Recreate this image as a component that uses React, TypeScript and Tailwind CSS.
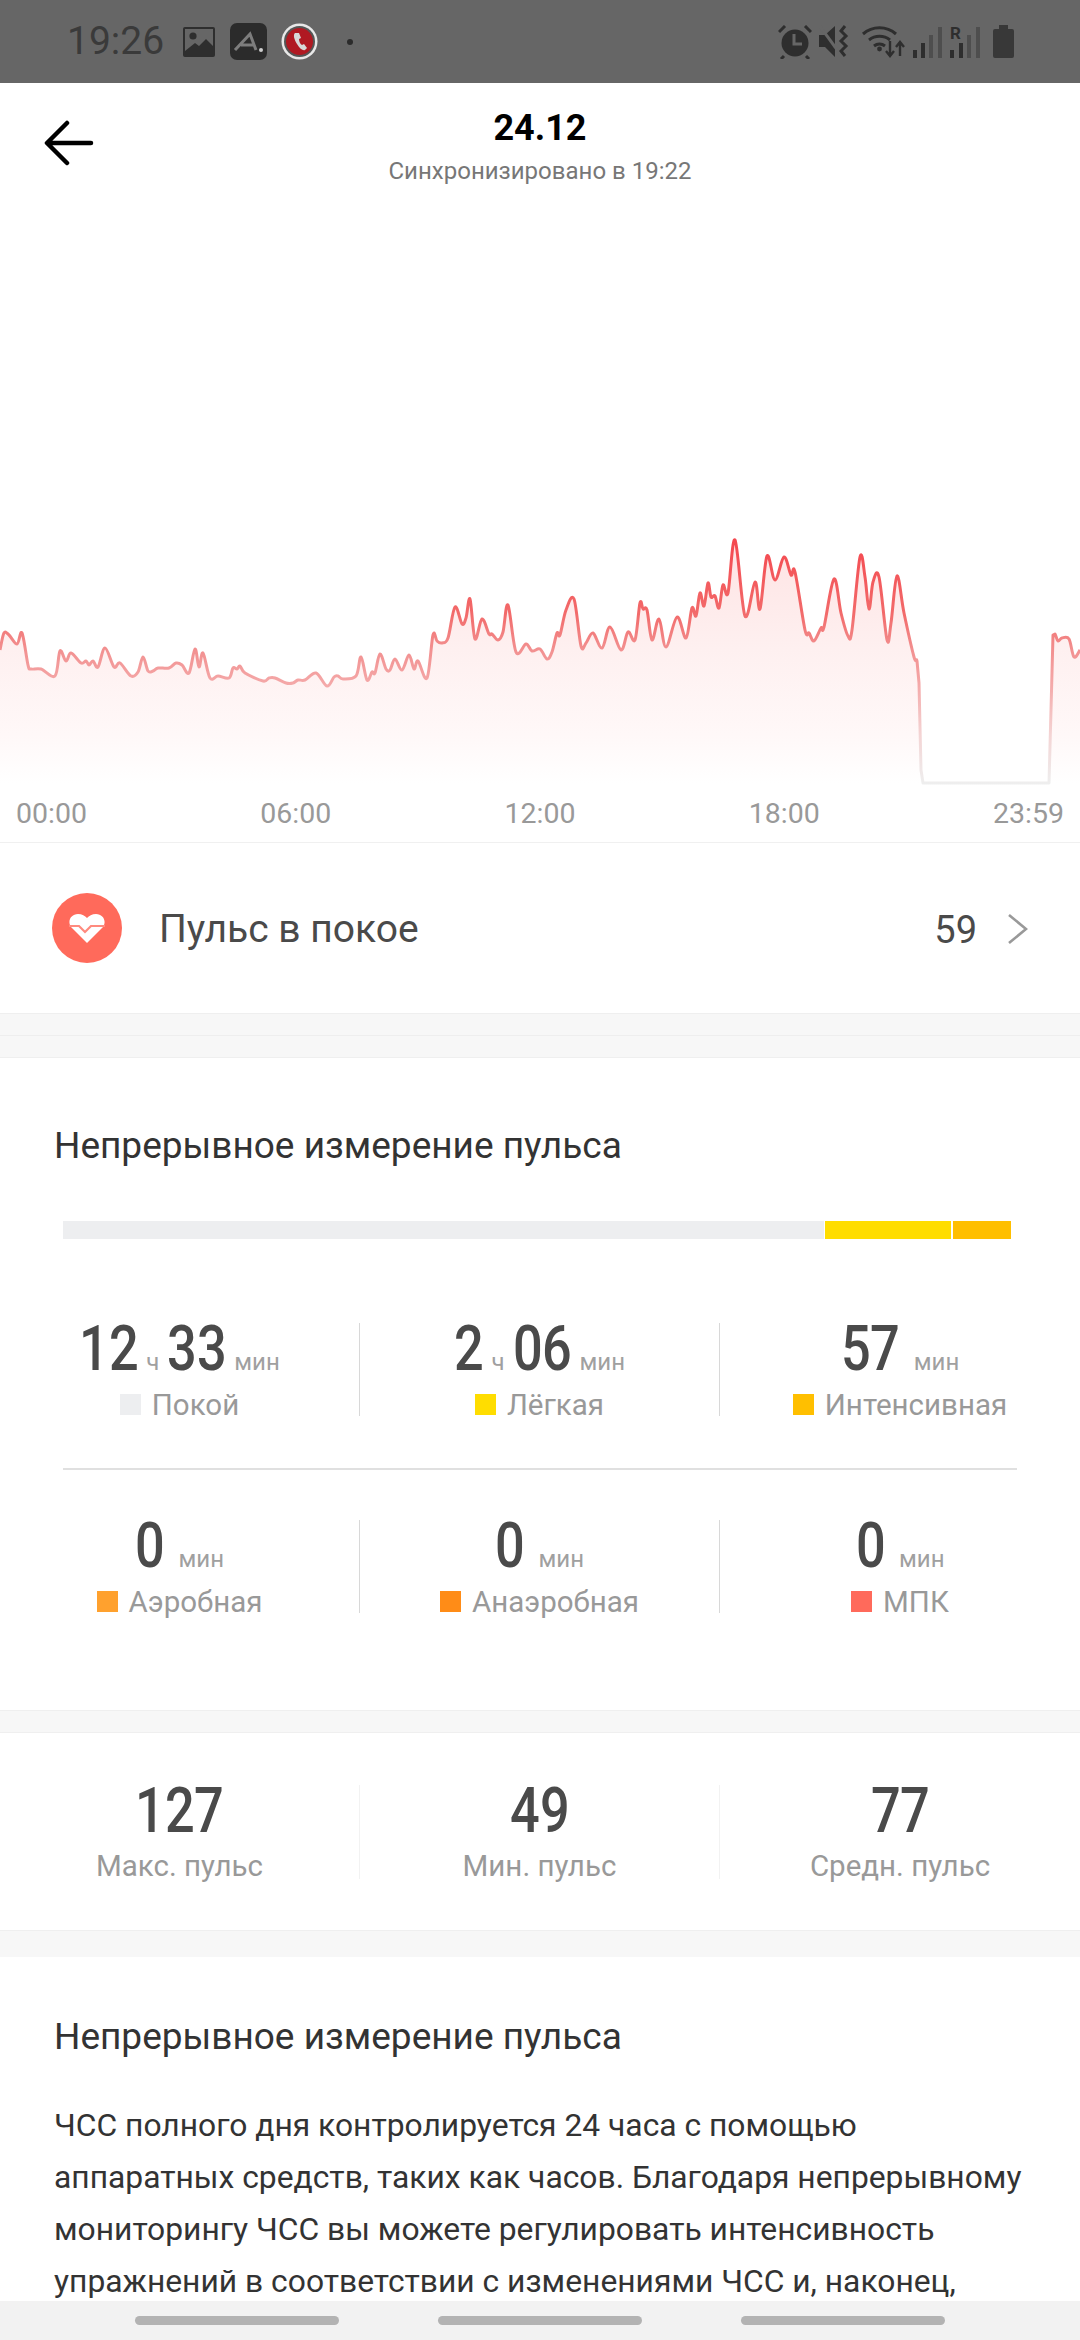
import React from "react";

const points: [number, number][] = [
  [0, 650], [4, 633], [9, 635], [17, 644], [22, 633], [28, 665], [31, 669], [41, 669], [55, 676], [60, 651],
  [66, 661], [71, 653], [81, 663], [86, 661], [89, 665], [93, 661], [98, 667], [105, 648], [114, 667], [120, 663],
  [131, 676], [138, 672], [143, 657], [148, 671], [153, 671], [158, 668], [169, 668], [176, 663], [182, 665], [189, 673],
  [195, 649], [199, 667], [203, 653], [210, 678], [218, 676], [229, 678], [233, 668], [237, 669], [240, 666], [245, 673],
  [263, 681], [269, 678], [275, 678], [286, 683], [293, 683], [298, 680], [305, 680], [316, 673], [327, 686], [334, 677],
  [338, 676], [343, 679], [356, 676], [361, 657], [367, 680], [372, 672], [375, 673], [380, 654], [386, 669], [390, 670],
  [395, 659], [402, 670], [409, 655], [414, 669], [418, 661], [427, 678], [433, 635], [437, 641], [442, 643], [448, 638],
  [455, 607], [462, 624], [466, 618], [470, 599], [475, 639], [482, 619], [489, 634], [492, 634], [498, 640], [503, 632],
  [508, 605], [516, 652], [526, 644], [532, 651], [540, 649], [547, 659], [552, 652], [557, 633], [560, 635], [566, 610],
  [574, 599], [581, 646], [586, 643], [593, 633], [602, 648], [610, 627], [621, 650], [628, 632], [635, 640], [640, 603],
  [643, 609], [647, 610], [652, 640], [659, 619], [666, 647], [677, 617], [686, 638], [692, 608], [696, 616], [700, 593],
  [704, 606], [708, 583], [711, 597], [715, 596], [719, 608], [723, 585], [728, 593], [735, 540], [745, 616], [755, 582],
  [760, 609], [767, 556], [775, 580], [784, 557], [791, 575], [795, 572], [805, 630], [809, 633], [814, 641], [821, 628],
  [824, 627], [834, 579], [841, 613], [848, 636], [852, 630], [860, 557], [865, 577], [869, 609], [873, 582], [879, 577],
  [887, 640], [891, 623], [897, 576], [904, 613], [914, 657], [917, 661], [919, 683], [921, 770], [923, 783], [1049, 783],
  [1051, 710], [1053, 635], [1055, 634], [1058, 641], [1062, 638], [1069, 639], [1074, 657], [1080, 650],
];

// catmull-rom through the traced points, straight near the drop-out so it doesn't overshoot
const buildLine = (pts: [number, number][]) => {
  let d = `M${pts[0][0]} ${pts[0][1]}`;
  for (let i = 0; i < pts.length - 1; i++) {
    const p0 = pts[Math.max(i - 1, 0)];
    const p1 = pts[i];
    const p2 = pts[i + 1];
    const p3 = pts[Math.min(i + 2, pts.length - 1)];
    const nearGap = p1[0] >= 917 && p1[0] <= 1053;
    const k = nearGap ? 0 : 0.17;
    d += `C${(p1[0] + (p2[0] - p0[0]) * k).toFixed(1)} ${(p1[1] + (p2[1] - p0[1]) * k).toFixed(1)} ${(p2[0] - (p3[0] - p1[0]) * k).toFixed(1)} ${(p2[1] - (p3[1] - p1[1]) * k).toFixed(1)} ${p2[0]} ${p2[1]}`;
  }
  return d;
};

const linePath = buildLine(points);

const PulseChart = () => (
  <svg className="block w-[1080px] h-[596px]" viewBox="0 190 1080 596">
    <defs>
      <linearGradient id="pulseFill" gradientUnits="userSpaceOnUse" x1="0" y1="540" x2="0" y2="783">
        <stop offset="0" stopColor="#fee3e3" />
        <stop offset="0.45" stopColor="#fef0f0" />
        <stop offset="0.8" stopColor="#fff8f8" />
        <stop offset="1" stopColor="#ffffff" />
      </linearGradient>
      <linearGradient id="pulseStroke" gradientUnits="userSpaceOnUse" x1="0" y1="540" x2="0" y2="783">
        <stop offset="0" stopColor="#f4484f" />
        <stop offset="0.3" stopColor="#f26a6a" />
        <stop offset="0.45" stopColor="#f29090" />
        <stop offset="0.58" stopColor="#f4a6a6" />
        <stop offset="0.8" stopColor="#f4d4d4" />
        <stop offset="1" stopColor="#eeeeee" />
      </linearGradient>
    </defs>
    <path d={`${linePath}L1080 783L0 783Z`} fill="url(#pulseFill)" />
    <path d={linePath} fill="none" stroke="url(#pulseStroke)" strokeWidth="3" strokeLinejoin="round" />
  </svg>
);

const StatusBar = () => (
  <div className="h-[83px] bg-[#666666] flex items-center text-[#3a3a3a] shrink-0">
    <span className="ml-[67px] w-[116px] text-[39px] leading-none">19:26</span>
    <svg className="w-[32px] h-[30px]" viewBox="0 0 32 30">
      <rect x="0" y="0" width="32" height="30" rx="2" fill="#2e2e2e" />
      <path d="M2 2h28v17l-7-7-7 7-4-3-10 8z" fill="#666666" />
      <circle cx="10" cy="9" r="3.6" fill="#2e2e2e" />
    </svg>
    <svg className="ml-[15px] w-[37px] h-[37px]" viewBox="0 0 37 37">
      <rect width="37" height="37" rx="7" fill="#2b2b2b" />
      <path d="M5 27L20 11l6 16M11 22h12" fill="none" stroke="#7d7d7d" strokeWidth="3" />
      <circle cx="31" cy="27" r="2" fill="#cfcfcf" />
    </svg>
    <svg className="ml-[14px] w-[37px] h-[37px]" viewBox="0 0 37 37">
      <circle cx="18.5" cy="18.5" r="18" fill="#e8e8e8" />
      <circle cx="18.5" cy="18.5" r="15.5" fill="#555555" />
      <circle cx="18.5" cy="18.5" r="13.5" fill="#b01922" />
      <path d="M14 10c-2 2-1 6 2 11s6 7 8 6l2-2-3-4-2 1c-2-1-3-4-3-6l2-1-2-5z" fill="#d8d8d8" />
    </svg>
    <div className="ml-[29px] w-[6px] h-[6px] rounded-full bg-[#2b2b2b]" />
    <div className="flex-1" />
    <svg className="w-[34px] h-[34px]" viewBox="0 0 34 34">
      <circle cx="17" cy="18" r="13.5" fill="#2e2e2e" />
      <path d="M16 9v10h8" fill="none" stroke="#666666" strokeWidth="3" />
      <path d="M1 7l6-6M33 7l-6-6M6 31l-3 3M28 31l3 3" stroke="#2e2e2e" strokeWidth="3" />
    </svg>
    <svg className="ml-[7px] w-[31px] h-[33px]" viewBox="0 0 31 33">
      <path d="M0 10h6l10-9v31L6 22H0z" fill="#2e2e2e" />
      <path d="M0 0l19 26" stroke="#666666" strokeWidth="3" />
      <path d="M26 1l-4 5 5 5-5 5 5 5-5 5 4 5" fill="none" stroke="#2e2e2e" strokeWidth="3" />
    </svg>
    <svg className="ml-[12px] w-[43px] h-[33px]" viewBox="0 0 43 33">
      <path d="M1 9a25 25 0 0 1 33 0M7 15a17 17 0 0 1 21 0M12 21a9 9 0 0 1 11 0" fill="none" stroke="#2e2e2e" strokeWidth="3" />
      <circle cx="17.5" cy="24" r="2.4" fill="#2e2e2e" />
      <path d="M28 16v14M24 26l4 5 4-5M38 31V17M34 22l4-5 4 5" fill="none" stroke="#2e2e2e" strokeWidth="2.4" />
    </svg>
    <svg className="ml-[8px] w-[29px] h-[32px]" viewBox="0 0 29 32">
      <rect x="0" y="24" width="4" height="8" fill="#2e2e2e" />
      <rect x="8" y="17" width="4" height="15" fill="#2e2e2e" />
      <rect x="16" y="9" width="4" height="23" fill="#4e4e4e" />
      <rect x="25" y="1" width="4" height="31" fill="#4e4e4e" />
    </svg>
    <div className="relative ml-[8px] w-[30px] h-[32px]">
      <span className="absolute left-0 top-[-1px] text-[17px] font-bold leading-none text-[#2e2e2e]">R</span>
      <svg className="w-[30px] h-[32px]" viewBox="0 0 30 32">
        <rect x="0" y="24" width="4" height="8" fill="#2e2e2e" />
        <rect x="9" y="17" width="4" height="15" fill="#2e2e2e" />
        <rect x="17" y="9" width="4" height="23" fill="#4e4e4e" />
        <rect x="26" y="1" width="4" height="31" fill="#4e4e4e" />
      </svg>
    </div>
    <svg className="ml-[13px] mr-[66px] w-[21px] h-[33px]" viewBox="0 0 21 33">
      <path d="M6 0h9v4h4a2 2 0 0 1 2 2v25a2 2 0 0 1-2 2H2a2 2 0 0 1-2-2V6a2 2 0 0 1 2-2h4z" fill="#383838" />
    </svg>
  </div>
);

const TopBar = () => (
  <div className="relative h-[107px] shrink-0 flex flex-col items-center">
    <svg className="absolute left-[44px] top-[37px] w-[50px] h-[46px]" viewBox="0 0 50 46">
      <path d="M47 23H4M23 3L3 23l20 20" fill="none" stroke="#000000" strokeWidth="4.5" strokeLinecap="round" strokeLinejoin="round" />
    </svg>
    <div className="mt-[24px] text-[36px] leading-[42px] font-bold text-black">24.12</div>
    <div className="mt-[7px] text-[24px] leading-[30px] text-[#777777]">Синхронизировано в 19:22</div>
  </div>
);

const Band = () => (
  <div className="h-[45px] bg-[#f7f7f7] border-y border-[#efefef] flex flex-col justify-center shrink-0">
    <div className="h-px bg-[#eeeeee]" />
  </div>
);

// no condensed family is installed, so each digit is squeezed on its own fixed advance
const Digits = ({ value }: { value: string }) => (
  <span className="inline-flex">
    {value.split("").map((digit, i) => (
      <span key={i} className="w-[29.5px] inline-flex justify-center scale-x-[0.83] text-[63px] leading-[52px] font-medium text-[#4a4a4a]">
        {digit}
      </span>
    ))}
  </span>
);

type Stat = { parts: [string, string][]; label: string; color: string };

const zoneRows: Stat[][] = [
  [
    { parts: [["12", "ч"], ["33", "мин"]], label: "Покой", color: "bg-[#edeef0]" },
    { parts: [["2", "ч"], ["06", "мин"]], label: "Лёгкая", color: "bg-[#ffdd00]" },
    { parts: [["57", "мин"]], label: "Интенсивная", color: "bg-[#ffbf00]" },
  ],
  [
    { parts: [["0", "мин"]], label: "Аэробная", color: "bg-[#ffa12e]" },
    { parts: [["0", "мин"]], label: "Анаэробная", color: "bg-[#ff8c17]" },
    { parts: [["0", "мин"]], label: "МПК", color: "bg-[#ff6a5b]" },
  ],
];

const ZoneCell = ({ stat, divider }: { stat: Stat; divider: boolean }) => (
  <div className={`h-[93px] flex flex-col items-center ${divider ? "border-r border-[#d8d8d8]" : ""}`}>
    <div className={`flex items-baseline h-[52px] ${stat.parts.length === 1 ? "gap-[14px]" : "gap-[8px]"}`}>
      {stat.parts.map(([value, unit]) => (
        <React.Fragment key={unit}>
          <Digits value={value} />
          <span className="text-[24px] leading-none text-[#a0a0a0]">{unit}</span>
        </React.Fragment>
      ))}
    </div>
    <div className="flex items-center mt-[11px] gap-[11px]">
      <div className={`w-[21px] h-[21px] ${stat.color}`} />
      <span className="pt-[2px] text-[29.5px] leading-[34px] text-[#999999]">{stat.label}</span>
    </div>
  </div>
);

const summary = [
  { value: "127", label: "Макс. пульс" },
  { value: "49", label: "Мин. пульс" },
  { value: "77", label: "Средн. пульс" },
];

export default function App() {
  return (
    <div className="w-[1080px] h-[2340px] flex flex-col overflow-hidden bg-white font-['Roboto',sans-serif]">
      <StatusBar />
      <div className="flex-1 min-h-0 overflow-hidden">
        <TopBar />
        <PulseChart />
        <div className="flex justify-between pl-[16px] pr-[16px] h-[57px] pt-[11px] text-[28.5px] leading-[34px] text-[#999999] border-b border-[#f0f0f0]">
          <span>00:00</span>
          <span>06:00</span>
          <span>12:00</span>
          <span>18:00</span>
          <span>23:59</span>
        </div>

        <div className="h-[170px] flex items-center pl-[52px] pr-[52px]">
          <div className="w-[70px] h-[70px] rounded-full bg-[#ff6a5b] flex items-center justify-center">
            <svg className="w-[36px] h-[30px]" viewBox="0 0 36 30">
              <path d="M18 30L2 14C-2 8 2 1 9 1c4 0 7 2 9 4 2-2 5-4 9-4 7 0 11 7 7 13z" fill="#ffffff" />
              <path d="M0 13h10l6 6 6-6h14" fill="none" stroke="#ff8a7e" strokeWidth="2.2" />
            </svg>
          </div>
          <span className="ml-[37px] pt-[3px] text-[39px] leading-none text-[#4a4a4a]">Пульс в покое</span>
          <span className="ml-auto pt-[3px] text-[38px] leading-none text-[#4a4a4a]">59</span>
          <svg className="ml-[30px] mt-[2px] w-[21px] h-[32px]" viewBox="0 0 21 32">
            <path d="M2 2l17 14L2 30" fill="none" stroke="#999999" strokeWidth="2.6" />
          </svg>
        </div>

        <Band />

        <div className="h-[652px] pt-[67px]">
          <div className="pl-[54px] text-[37px] leading-[42px] text-[#333333]">Непрерывное измерение пульса</div>
          <div className="mx-[63px] mt-[54px] w-[948px] h-[18px] flex">
            <div className="w-[761px] bg-[#edeef0]" />
            <div className="ml-[1px] w-[126px] bg-[#ffdd00]" />
            <div className="ml-[2px] w-[58px] bg-[#ffbf00]" />
          </div>
          <div className="mt-[84px] grid grid-cols-3">
            {zoneRows[0].map((stat, i) => (
              <ZoneCell key={stat.label} stat={stat} divider={i < 2} />
            ))}
          </div>
          <div className="mx-[63px] mt-[52px] w-[954px] h-[2px] bg-[#e0e0e0]" />
          <div className="mt-[50px] grid grid-cols-3">
            {zoneRows[1].map((stat, i) => (
              <ZoneCell key={stat.label} stat={stat} divider={i < 2} />
            ))}
          </div>
        </div>

        <div className="h-[23px] bg-[#f7f7f7] border-y border-[#efefef]" />

        <div className="h-[197px] pt-[52px] grid grid-cols-3">
          {summary.map((item, i) => (
            <div key={item.label} className={`h-[94px] flex flex-col items-center ${i < 2 ? "border-r border-[#f2f2f2]" : ""}`}>
              <Digits value={item.value} />
              <span className="mt-[12px] text-[29.5px] leading-[34px] text-[#999999]">{item.label}</span>
            </div>
          ))}
        </div>

        <div className="h-[27px] bg-[#f7f7f7] border-t border-[#efefef]" />

        <div className="pl-[54px] pt-[59px]">
          <div className="text-[37px] leading-[42px] text-[#333333]">Непрерывное измерение пульса</div>
          <p className="mt-[41px] text-[31.8px] leading-[52px] text-[#333333] whitespace-nowrap">
            ЧСС полного дня контролируется 24 часа с помощью
            <br />
            аппаратных средств, таких как часов. Благодаря непрерывному
            <br />
            мониторингу ЧСС вы можете регулировать интенсивность
            <br />
            упражнений в соответствии с изменениями ЧСС и, наконец,
          </p>
        </div>
      </div>
      <div className="h-[39px] shrink-0 bg-[#f2f2f2] flex justify-center gap-[99px] pt-[15px]">
        <div className="w-[204px] h-[9px] rounded-full bg-[#b3b3b3]" />
        <div className="w-[204px] h-[9px] rounded-full bg-[#b3b3b3]" />
        <div className="w-[204px] h-[9px] rounded-full bg-[#b3b3b3]" />
      </div>
    </div>
  );
}
